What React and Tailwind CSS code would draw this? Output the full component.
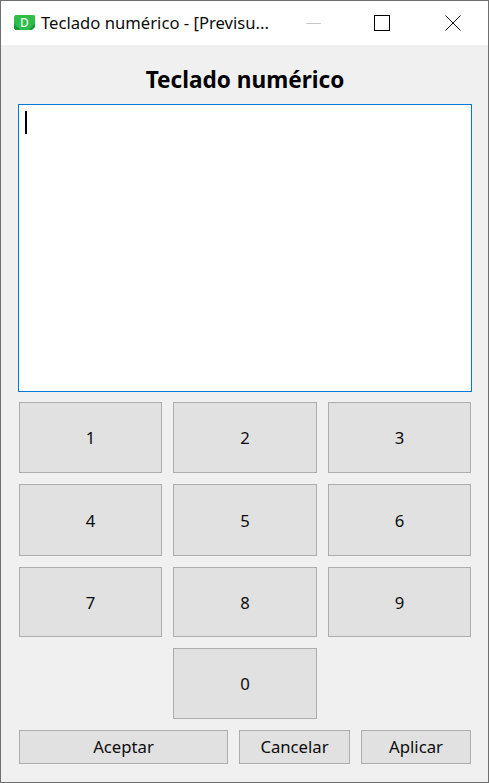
const font = { fontFamily: '"Noto Sans", "Open Sans", sans-serif' }

function KeyButton({ label, className = '' }) {
  return (
    <button className={`flex items-center justify-center border border-[#adadad] bg-[#e1e1e1] text-[16.7px] leading-none text-[#0c0c0c] ${className}`}>
      {label}
    </button>
  )
}

function AppIcon() {
  return (
    <svg width="21" height="15" viewBox="0 0 21 15" className="mb-[1px] shrink-0">
      <path d="M1.5 0H20L21 1V8.5L15 15H1.5L0 13.5V1.5Z" fill="#2ebd4b" />
      <path d="M21 8V12L18 15H14.5Z" fill="#169a35" />
      <path d="M0 8.5L6.5 15H1.5L0 13.5Z" fill="#169a35" />
      <text x="10.5" y="11.5" textAnchor="middle" fontSize="12" fontFamily="Noto Sans" fontWeight="500" fill="#e6f8ea">D</text>
    </svg>
  )
}

export default function App() {
  const keys = ['1', '2', '3', '4', '5', '6', '7', '8', '9']

  return (
    <div style={font} className="flex h-[783px] w-[489px] flex-col border border-[#6f6f6f] bg-[#f0f0f0] text-black">
      <div className="flex h-[44px] shrink-0 items-center bg-white pl-[13px]">
        <AppIcon />
        <span className="ml-[6px] min-w-0 flex-1 whitespace-nowrap text-[16.65px] leading-normal text-[#0c0c0c]">Teclado numérico - [Previsu...</span>
        <div className="flex w-[70px] justify-center">
          <div className="h-px w-[15px] bg-[#c8c8c8]" />
        </div>
        <div className="flex w-[70px] justify-center pr-[2px]">
          <div className="size-[16px] border-[1.5px] border-black" />
        </div>
        <div className="flex w-[70px] justify-center">
          <svg width="16" height="16" viewBox="0 0 16 16" fill="none" stroke="#111" strokeWidth="1">
            <path d="M0.5 0.5L15.5 15.5M15.5 0.5L0.5 15.5" />
          </svg>
        </div>
      </div>

      <div className="flex flex-1 flex-col pl-[17px] pr-[16px]">
        <h1 className="flex h-[59px] shrink-0 items-center justify-center pt-[12px] text-[22.6px] font-bold leading-none">Teclado numérico</h1>

        <div className="h-[288px] shrink-0 border border-[#0078d7] bg-white pl-[6px] pt-[6px]">
          <div className="h-[23px] w-[2px] bg-black" />
        </div>

        <div className="mt-[10px] grid grid-cols-[143px_144px_143px] grid-rows-[71px_72px_70px_71px] gap-[11px] pl-px">
          {keys.map((k) => (
            <KeyButton key={k} label={k} className="pt-[2px]" />
          ))}
          <KeyButton label="0" className="col-start-2 pt-[2px]" />
        </div>

        <div className="mt-[11px] flex h-[34px] gap-[11px] pl-px">
          <KeyButton label="Aceptar" className="w-[209px]" />
          <KeyButton label="Cancelar" className="w-[111px]" />
          <KeyButton label="Aplicar" className="w-[110px]" />
        </div>
      </div>
    </div>
  )
}
